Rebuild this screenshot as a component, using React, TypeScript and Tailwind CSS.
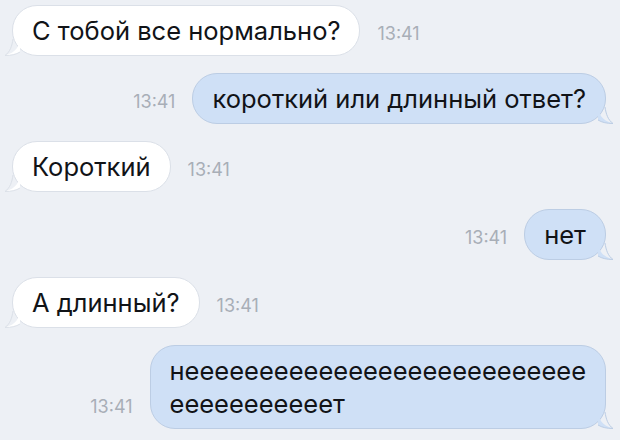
import React from "react";

type Msg = { out: boolean; lines: string[] };

const messages: Msg[] = [
  { out: false, lines: ["С тобой все нормально?"] },
  { out: true, lines: ["короткий или длинный ответ?"] },
  { out: false, lines: ["Короткий"] },
  { out: true, lines: ["нет"] },
  { out: false, lines: ["А длинный?"] },
  { out: true, lines: ["н" + "е".repeat(27), "е".repeat(11) + "т"] },
];

function Tail({ out }: { out: boolean }) {
  // little curl at the bottom corner of the bubble
  if (out) {
    return (
      <svg className="absolute -right-[9px] bottom-[-1px] w-[16px] h-[18px]" viewBox="0 0 16 18">
        <path d="M0 0 C1 8 3 14 15 17.5 C9 17.5 4 16.5 0 14 Z" fill="#cfe0f6" />
        <path d="M7 1 C8 8 10 14 15 17.5 C9 17.5 4 16.5 0 14" fill="none" stroke="#bccde4" strokeWidth="1" />
      </svg>
    );
  }
  return (
    <svg className="absolute -left-[9px] bottom-[-1px] w-[16px] h-[18px]" viewBox="0 0 16 18">
      <path d="M16 0 C15 8 13 14 1 17.5 C7 17.5 12 16.5 16 14 Z" fill="#ffffff" />
      <path d="M9 1 C8 8 6 14 1 17.5 C7 17.5 12 16.5 16 14" fill="none" stroke="#dbe0e8" strokeWidth="1" />
    </svg>
  );
}

function Bubble({ msg }: { msg: Msg }) {
  const time = <span className="text-[18px] leading-[22px] text-[#a8aeb7] mb-[11px] shrink-0">13:41</span>;
  return (
    <div className={`flex items-end gap-[17px] ${msg.out ? "justify-end" : "justify-start"}`}>
      {msg.out && time}
      <div
        className={`relative rounded-[25px] border px-[19px] py-[8px] text-[25.5px] leading-[33px] text-[#111317] ${
          msg.out ? "bg-[#cfe0f6] border-[#bccde4]" : "bg-white border-[#dbe0e8]"
        }`}
      >
        <Tail out={msg.out} />
        <div className="relative">
          {msg.lines.map((l, i) => (
            <div key={i}>{l}</div>
          ))}
        </div>
      </div>
      {!msg.out && time}
    </div>
  );
}

export default function App() {
  return (
    <div
      className="w-[620px] h-[440px] bg-[#edf0f5] overflow-hidden pl-[12px] pr-[14px] pt-[5px] flex flex-col gap-[17px]"
      style={{ fontFamily: "Inter, 'Liberation Sans', sans-serif" }}
    >
      {messages.map((m, i) => (
        <Bubble key={i} msg={m} />
      ))}
    </div>
  );
}
